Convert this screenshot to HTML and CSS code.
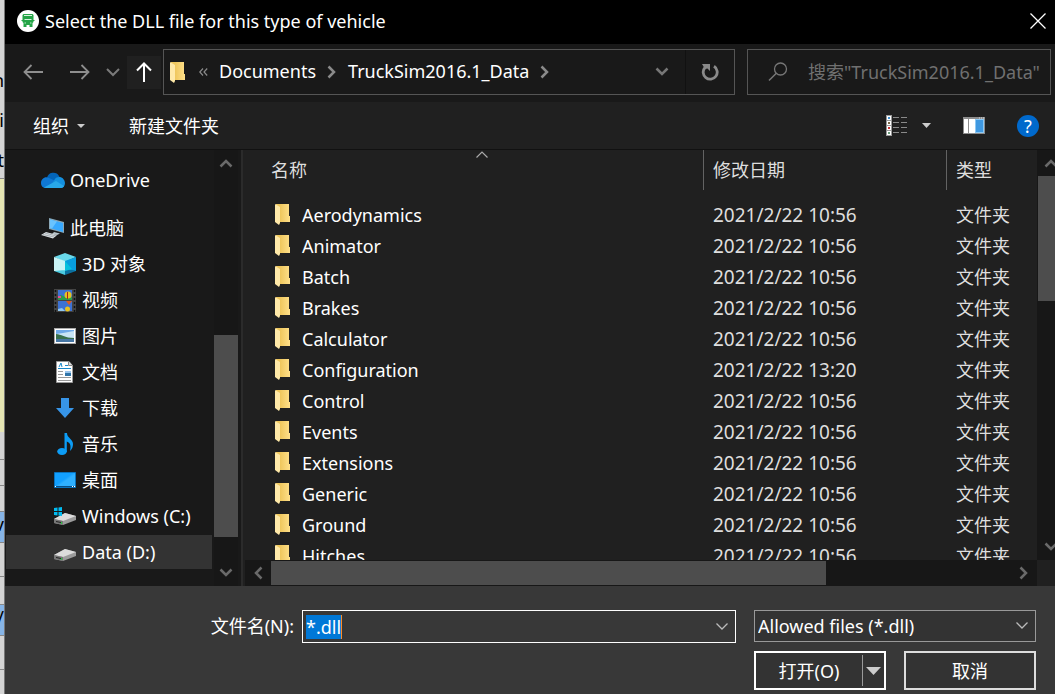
FILE: index.html
```html
<!DOCTYPE html>
<html lang="zh-CN">
<head>
<meta charset="utf-8">
<title>Select the DLL file for this type of vehicle</title>
<link rel="stylesheet" href="styles.css">
</head>
<body>
<svg class="defs" aria-hidden="true">
  <defs>
    <linearGradient id="fold" x1="0" x2="1"><stop offset="0.3" stop-color="#efc75d"/><stop offset="1" stop-color="#ffe08a"/></linearGradient>
    <linearGradient id="screen" x1="0" y1="0" x2="1" y2="1"><stop offset="0.45" stop-color="#12a0ff"/><stop offset="0.55" stop-color="#2fb0ff"/></linearGradient>
    <symbol id="folder" viewBox="0 0 15 21"><path d="M1 0h13v12h1v6H1z" fill="url(#fold)"/><path d="M0 0l5 3v16l-1 2-4-3z" fill="#ffe9a8"/></symbol>
    <symbol id="up" viewBox="0 0 14 10"><path d="M1.500 8.500L7 3l5.500 5.500" fill="none" stroke="currentColor" stroke-width="2.500"/></symbol>
    <symbol id="down" viewBox="0 0 14 10"><path d="M1.500 1.500L7 7l5.500-5.500" fill="none" stroke="currentColor" stroke-width="2.500"/></symbol>
    <symbol id="left" viewBox="0 0 10 14"><path d="M8.500 1.500L3 7l5.500 5.500" fill="none" stroke="currentColor" stroke-width="2.500"/></symbol>
    <symbol id="right" viewBox="0 0 10 14"><path d="M1.500 1.500L7 7l-5.500 5.500" fill="none" stroke="currentColor" stroke-width="2.500"/></symbol>
    <symbol id="drive" viewBox="0 0 22 12"><path d="M0 6L11 0l11 3v4L9 12 0 10z" fill="#9b9b9b"/><path d="M0 6L11 0l11 3-13 5z" fill="#dcdcdc"/><path d="M0 6l9 2v4l-9-2z" fill="#777"/><path d="M2 8l5 1v1L2 9z" fill="#222"/><path d="M7 9h1v2H7z" fill="#27c93f"/></symbol>
  </defs>
</svg>

<div class="behind" aria-hidden="true">
  <div class="seg s1"><span>h</span><span>i</span><span>t</span></div>
  <div class="seg s2"></div>
  <div class="seg s3"></div>
  <div class="seg s4"></div>
  <div class="seg s4"></div>
  <div class="seg s5"><span>v</span></div>
  <div class="seg s6"></div>
  <div class="seg s3"></div>
  <div class="seg s5"><span>/</span></div>
  <div class="seg s6"></div>
  <div class="seg s6"></div>
</div>

<main class="dialog">
  <header class="title">
    <svg width="22" height="22" viewBox="0 0 22 22"><circle cx="11" cy="11" r="11" fill="#fff"/><path d="M6.500 4h9l1 1v5h1v1h-1v1l-1 1v4h-3v-2h-3v2h-3v-4l-1-1v-1h-1v-1h1V5z" fill="#25a447"/><path d="M7 5.500h8M7.500 9.500h7" stroke="#d8f2de"/><path d="M7.500 13H9M13 13h1.500" stroke="#bfe8ca"/></svg>
    <h1>Select the DLL file for this type of vehicle</h1>
    <button class="close" aria-label="Close"><svg width="16" height="16" viewBox="0 0 16 16"><path d="M.5.5l15 15M15.500.5l-15 15" stroke="#fff" stroke-width="1.300"/></svg></button>
  </header>

  <nav class="nav">
    <div class="arrows">
      <button aria-label="Back"><svg width="20" height="16" viewBox="0 0 20 16"><path d="M20 8H1.500M8.500 1l-7 7 7 7" fill="none" stroke="#8e8e8e" stroke-width="1.800"/></svg></button>
      <button aria-label="Forward"><svg width="20" height="16" viewBox="0 0 20 16"><path d="M0 8h18.500M11.500 1l7 7-7 7" fill="none" stroke="#8e8e8e" stroke-width="1.800"/></svg></button>
      <button class="recent" aria-label="Recent"><svg width="14" height="10" viewBox="0 0 14 10"><path d="M1 2l6 6 6-6" fill="none" stroke="#7a7a7a" stroke-width="2"/></svg></button>
      <button class="upbtn" aria-label="Up"><svg width="16" height="20" viewBox="0 0 16 20"><path d="M8 20V1.500M1 8.500l7-7 7 7" fill="none" stroke="#fff" stroke-width="2"/></svg></button>
    </div>
    <div class="address">
      <svg width="15" height="21"><use href="#folder"/></svg>
      <svg class="more" width="9" height="8" viewBox="0 0 9 8"><path d="M4 .5L.8 4 4 7.500M8.200.5L5 4l3.200 3.500" fill="none" stroke="#8a8a8a" stroke-width="1.200"/></svg>
      <a href="#">Documents</a>
      <svg class="sep" width="10" height="14"><use href="#right"/></svg>
      <a href="#">TruckSim2016.1_Data</a>
      <svg class="sep" width="10" height="14"><use href="#right"/></svg>
      <button class="history" aria-label="History"><svg width="14" height="10"><use href="#down"/></svg></button>
      <button class="refresh" aria-label="Refresh"><svg width="18" height="18" viewBox="0 0 18 18"><path d="M4 4.500A7 7 0 1 0 13 3.300" fill="none" stroke="#8a8a8a" stroke-width="2.800"/><path d="M1 1h8v7L6.500 5.500 4 6z" fill="#8a8a8a"/></svg></button>
    </div>
    <label class="search">
      <svg width="20" height="20" viewBox="0 0 20 20"><circle cx="12.500" cy="7" r="6" fill="none" stroke="#777" stroke-width="1.300"/><path d="M8.300 11.200L1 18.500" stroke="#777" stroke-width="1.500"/></svg>
      <input type="text" aria-label="Search" placeholder='搜索"TruckSim2016.1_Data"'>
    </label>
  </nav>

  <div class="tools">
    <button class="organize">组织<svg width="8" height="4" viewBox="0 0 8 4"><path d="M0 0h8L4 4z" fill="#ccc"/></svg></button>
    <button>新建文件夹</button>
    <div class="right">
      <button aria-label="View"><svg width="22" height="22" viewBox="0 0 22 22"><path d="M0 0h6v21H0z" fill="#999"/><path d="M1 1h4v4H1zM1 6h4v4H1zM1 11h4v4H1zM1 16h4v4H1z" fill="#fff"/><path d="M2 2h2v2H2z" fill="#3d8fd0"/><path d="M2 7h2v2H2z" fill="#7a6a4a"/><path d="M2 12h2v2H2z" fill="#c33"/><path d="M2 17h2v2H2z" fill="#6a9a7a"/><path d="M7 2.500h6m2 0h6M7 7.500h6m2 0h6M7 12.500h6m2 0h6M7 17.500h6m2 0h6" stroke="#8a8a8a"/></svg></button>
      <button class="viewmenu" aria-label="View menu"><svg width="9" height="5" viewBox="0 0 9 5"><path d="M0 0h9L4.500 5z" fill="#ccc"/></svg></button>
      <button class="pane" aria-label="Preview pane"><svg width="22" height="17" viewBox="0 0 22 17"><path d="M0 0h22v17H0z" fill="#8d8d8d"/><path d="M1 2h4v14H1zM6 2h6v14H6z" fill="#fff"/><path d="M12 2h9v14h-9z" fill="#8cc8f4"/><path d="M13 3h7v12h-7z" fill="#3f98e0"/><path d="M16 1h1m1 0h1m1 0h1" stroke="#ddd"/></svg></button>
      <button class="help" aria-label="Help">?</button>
    </div>
  </div>

  <section class="content">
    <aside class="side">
      <ul class="tree">
        <li class="root"><svg width="24" height="16" viewBox="0 0 24 16"><path d="M6 6A6.500 6.500 0 0 1 18 4l3 6H4z" fill="#0364b8"/><path d="M0 11c0-4 4-7 8-5l9 4-8 6H5c-3 0-5-2-5-5z" fill="#0f78d4"/><path d="M14 7c2-3 9-3 10 4 0 3-2 5-4 5H8z" fill="#1490df"/><path d="M3 15.500L15 9l8 5c-1 1.500-2 2-4 2H5z" fill="#28a8ea"/></svg><span>OneDrive</span></li>
        <li class="root gap"><svg width="24" height="21" viewBox="0 0 24 21"><path d="M8 0l15 4v11L8 11z" fill="#8aa8b8"/><path d="M9 1.500l13 3.500v9L9 10z" fill="#38a9ff"/><path d="M9 1.500l7 2-5 7-2-.6z" fill="#69c3ff"/><path d="M13 14l6 1.500-3 1.500-5-1z" fill="#b8c4ca"/><path d="M5 14l11 3-4 3.500L0 17z" fill="#dfe3e6"/><path d="M2 16.500l11 2.500M4 15l11 3" stroke="#8f999f" stroke-width=".7"/></svg><span>此电脑</span></li>
        <li><svg width="22" height="22" viewBox="0 0 22 22"><path d="M0 4L11 0l11 4-11 5z" fill="#69d8ea"/><path d="M0 4l11 4v10L0 18z" fill="#c9f3f5"/><path d="M22 4L11 8v9l11 1z" fill="#079ddd"/><path d="M11 8v9l-11 1 11 4z" fill="#4bcbe0"/><path d="M11 16l11 2-11 4z" fill="#0b6f9e"/><path d="M11 8l7 8-7 2z" fill="#06c0dd"/></svg><span>3D 对象</span></li>
        <li><svg width="22" height="23" viewBox="0 0 22 23"><path d="M0 0h22v23H0z" fill="#444"/><path d="M4 1h14v10H4zM4 12h14v10H4z" fill="#3d72d4"/><path d="M1.500 1v22M20.500 1v22" stroke="#111" stroke-width="1.500" stroke-dasharray="2 2"/><path d="M4 8l3-2 4 2 3-1 4 1v3H4z" fill="#2d9a4e"/><path d="M4 7h3v2H4z" fill="#e94d92"/><circle cx="14" cy="6" r="3.500" fill="#e9c21f"/><path d="M13 3h1v7h-1z" fill="#a22"/><path d="M12 12h6l-3 4z" fill="#e05a1c"/><circle cx="13.500" cy="20" r="2.500" fill="#e9c21f"/><path d="M4 20l4-1 3 3H4z" fill="#8fc8ef"/></svg><span>视频</span></li>
        <li><svg width="22" height="16" viewBox="0 0 22 16"><path d="M0 0h22v16H0z" fill="#aaa"/><path d="M1 1h20v14H1z" fill="#fff"/><path d="M2 2h18v12H2z" fill="#6ea9e8"/><path d="M2 6l7-1 11-2v7H2z" fill="#c7e4f6"/><path d="M2 6c5 0 9 4 18 4v2H2z" fill="#38704d"/><path d="M2 11h18v3H2z" fill="#4777a5"/></svg><span>图片</span></li>
        <li><svg width="22" height="22" viewBox="0 0 22 22"><path d="M2.500.5H15l3.500 4v17h-16z" fill="#fff" stroke="#999"/><path d="M14.500.5v4h4" fill="#ddd" stroke="#888"/><path d="M4 7.500h13" stroke="#1888c9"/><path d="M5 6l2-4 1 4M11 4.500h3" fill="none" stroke="#1888c9"/><path d="M4 10.500h5m-5 3h5m-5 3h13m-13 3h13" stroke="#999"/><path d="M11 10h6v5h-6z" fill="#3175a8"/><path d="M11 10h6v2h-6z" fill="#9ac5ed"/></svg><span>文档</span></li>
        <li><svg width="22" height="20" viewBox="0 0 22 20"><path d="M7 0h8v10h5l-9 10-9-10h5z" fill="#3795e8"/></svg><span>下载</span></li>
        <li><svg width="22" height="22" viewBox="0 0 22 22"><ellipse cx="8" cy="18.500" rx="4.800" ry="3.500" fill="#0c9cf5"/><path d="M10.500 0H13c0 5 6 6 6 11 0 3-1 5-3 7 1-4 1-8-3.200-9.500V19h-2.300z" fill="#0c9cf5"/></svg><span>音乐</span></li>
        <li><svg width="22" height="16" viewBox="0 0 22 16"><path d="M.5.5h21v15H.5z" fill="url(#screen)" stroke="#0872bd"/><path d="M1 14.500h20" stroke="#064d85"/><path d="M1 14.500h1m16 0h1m1 0h1" stroke="#fff"/></svg><span>桌面</span></li>
        <li><svg width="22" height="20" viewBox="0 0 22 20"><use href="#drive" y="7" width="22" height="12"/><path d="M0 2l3.500-.5V5H0zM4.500 1.400L8 .9V5H4.500zM0 6h3.500v3.500L0 9zM4.500 6H8v4l-3.500-.4z" fill="#00bcf2"/></svg><span>Windows (C:)</span></li>
        <li class="selected"><svg width="22" height="20"><use href="#drive" y="7" width="22" height="12"/></svg><span>Data (D:)</span></li>
      </ul>
      <div class="vbar sidebar-scroll">
        <svg width="14" height="10"><use href="#up"/></svg>
        <div class="rail"><i class="thumb low-thumb"></i></div>
        <svg width="14" height="10"><use href="#down"/></svg>
      </div>
    </aside>

    <div class="files">
      <div class="list">
        <table>
          <colgroup><col><col class="c-date"><col class="c-type"></colgroup>
          <thead><tr><th>名称<svg class="sort" width="12" height="7" viewBox="0 0 12 7"><path d="M.5 6.500L6 1l5.500 5.500" fill="none" stroke="#aaa" stroke-width="1.200"/></svg></th><th>修改日期</th><th>类型</th></tr></thead>
          <tbody>
            <tr><td><svg width="15" height="21"><use href="#folder"/></svg>Aerodynamics</td><td>2021/2/22 10:56</td><td>文件夹</td></tr>
            <tr><td><svg width="15" height="21"><use href="#folder"/></svg>Animator</td><td>2021/2/22 10:56</td><td>文件夹</td></tr>
            <tr><td><svg width="15" height="21"><use href="#folder"/></svg>Batch</td><td>2021/2/22 10:56</td><td>文件夹</td></tr>
            <tr><td><svg width="15" height="21"><use href="#folder"/></svg>Brakes</td><td>2021/2/22 10:56</td><td>文件夹</td></tr>
            <tr><td><svg width="15" height="21"><use href="#folder"/></svg>Calculator</td><td>2021/2/22 10:56</td><td>文件夹</td></tr>
            <tr><td><svg width="15" height="21"><use href="#folder"/></svg>Configuration</td><td>2021/2/22 13:20</td><td>文件夹</td></tr>
            <tr><td><svg width="15" height="21"><use href="#folder"/></svg>Control</td><td>2021/2/22 10:56</td><td>文件夹</td></tr>
            <tr><td><svg width="15" height="21"><use href="#folder"/></svg>Events</td><td>2021/2/22 10:56</td><td>文件夹</td></tr>
            <tr><td><svg width="15" height="21"><use href="#folder"/></svg>Extensions</td><td>2021/2/22 10:56</td><td>文件夹</td></tr>
            <tr><td><svg width="15" height="21"><use href="#folder"/></svg>Generic</td><td>2021/2/22 10:56</td><td>文件夹</td></tr>
            <tr><td><svg width="15" height="21"><use href="#folder"/></svg>Ground</td><td>2021/2/22 10:56</td><td>文件夹</td></tr>
            <tr><td><svg width="15" height="21"><use href="#folder"/></svg>Hitches</td><td>2021/2/22 10:56</td><td>文件夹</td></tr>
          </tbody>
        </table>
      </div>
      <div class="vbar list-scroll">
        <svg width="14" height="10"><use href="#up"/></svg>
        <div class="rail"><i class="thumb top-thumb"></i></div>
        <svg width="14" height="10"><use href="#down"/></svg>
      </div>
      <div class="hbar">
        <svg width="10" height="14"><use href="#left"/></svg>
        <div class="rail"><i class="thumb"></i></div>
        <svg width="10" height="14"><use href="#right"/></svg>
      </div>
    </div>
  </section>

  <form class="foot">
    <label for="fname">文件名(N):</label>
    <div class="combo">
      <input id="fname" type="text" value="*.dll" autofocus>
      <button type="button" aria-label="Show names"><svg width="12" height="7" viewBox="0 0 12 7"><path d="M.5.5L6 6 11.500.5" fill="none" stroke="#bbb" stroke-width="1.300"/></svg></button>
    </div>
    <div class="filter">
      <select aria-label="File type"><option>Allowed files (*.dll)</option></select>
      <svg width="12" height="7" viewBox="0 0 12 7"><path d="M.5.5L6 6 11.500.5" fill="none" stroke="#bbb" stroke-width="1.300"/></svg>
    </div>
    <div class="actions">
      <div class="split">
        <button type="button">打开(O)</button>
        <button type="button" class="drop" aria-label="Open options"><svg width="15" height="8" viewBox="0 0 15 8"><path d="M0 0h15L7.500 8z" fill="#ccc"/></svg></button>
      </div>
      <button type="button" class="cancel">取消</button>
    </div>
  </form>
</main>
<script src="main.js"></script>
</body>
</html>
```
FILE: main.js
```js
const nameBox = document.getElementById("fname");
nameBox.focus();
nameBox.select();
```
FILE: styles.css
```css
* { box-sizing: border-box; }
body {
  margin: 0;
  height: 100vh;
  display: flex;
  overflow: hidden;
  background: #191919;
  color: #fff;
  font: 18px/24px "Noto Sans", "Noto Sans CJK SC", sans-serif;
}
button, input, select {
  margin: 0;
  padding: 0;
  border: 0;
  border-radius: 0;
  outline: 0;
  background: none;
  color: inherit;
  font: inherit;
}
button { display: flex; align-items: center; justify-content: center; }
a { color: inherit; text-decoration: none; }
svg { display: block; flex: none; }
.defs { position: absolute; width: 0; height: 0; }

/* sliver of the window underneath */
.behind { flex: none; width: 5px; overflow: hidden; border-right: 1px solid #777; background: #d4d4d4; color: #000; display: flex; flex-direction: column; }
.seg { flex: none; display: flex; flex-direction: column; align-items: flex-end; border-bottom: 1px solid #888; }
.s1 { height: 179px; padding-top: 68px; gap: 16px; }
.s2 { height: 253px; background: #e6e6b4; border: 0; }
.s3 { height: 28px; }
.s4 { height: 26px; }
.s5 { height: 31px; background: #86b4e6; }
.s6 { height: 34px; }

.dialog { flex: 1; min-width: 0; display: flex; flex-direction: column; }

.title { flex: none; height: 44px; padding: 0 9px 2px 12px; display: flex; align-items: center; gap: 6px; background: #000; }
.title h1 { flex: 1; margin: 0; font-size: 18px; font-weight: 400; }

.nav { flex: none; height: 58px; padding: 5px 4px 7px 18px; display: flex; gap: 2px; }
.arrows { display: flex; align-items: center; }
.arrows button { width: 34px; height: 33px; }
.arrows button:nth-child(1) { width: 20px; margin-right: 27px; }
.arrows button:nth-child(2) { width: 20px; }
.arrows .recent { width: 37px; padding-left: 8px; }
.arrows .upbtn { background: #202020; }
.address, .search { display: flex; align-items: center; border: 1px solid #555; }
.address { flex: 1; padding-left: 6px; }
.address a { padding-bottom: 2px; }
.more { margin: 0 11px 0 14px; }
.sep { margin: 0 11px; color: #8a8a8a; }
.history { width: 48px; height: 100%; margin-left: auto; color: #777; border-right: 1px solid #111; }
.refresh { width: 48px; height: 100%; }
.search { flex: none; width: 304px; margin-left: 10px; padding-left: 20px; gap: 20px; }
.search input { flex: 1; min-width: 0; }
.search input::placeholder { color: #707070; opacity: 1; }

.tools { flex: none; height: 48px; padding: 0 16px 0 28px; display: flex; align-items: center; background: #202020; border-bottom: 1px solid #111; }
.organize { gap: 8px; margin-right: 44px; }
.right { display: flex; align-items: center; margin-left: auto; }
.viewmenu { margin-left: 14px; }
.pane { margin: 0 32px; }
.help { width: 22px; height: 22px; border-radius: 50%; background: #0069cc; }

.content { flex: 1; min-height: 0; display: flex; }
.side { flex: none; width: 238px; display: flex; border-right: 2px solid #2b2b2b; }
.tree { flex: 1; min-width: 0; margin: 0; padding: 13px 2px 0 1px; list-style: none; overflow: hidden; }
.tree li { height: 34px; margin-bottom: 2px; padding-left: 48px; display: flex; align-items: center; gap: 6px; }
.tree .root { padding-left: 35px; gap: 5px; }
.tree .gap { margin-top: 14px; }
.tree .selected { background: #333; }

.vbar { display: flex; flex-direction: column; align-items: center; background: #171717; color: #6a6a6a; overflow: hidden; }
.vbar > svg { margin: 8px 0; }
.rail { flex: 1; align-self: stretch; display: flex; }
.thumb { display: block; background: #4d4d4d; }
.vbar .thumb { width: 100%; }
.sidebar-scroll { flex: none; width: 24px; margin-right: 3px; }
.sidebar-scroll .rail { padding-bottom: 23px; }
.low-thumb { height: 56%; align-self: flex-end; }
.top-thumb { height: 35%; }

.files { flex: 1; min-width: 0; display: grid; grid-template: minmax(0, 1fr) 26px / minmax(0, 1fr) 18px; background: #202020; }
.list { overflow: hidden; }
table { width: 100%; border-collapse: separate; border-spacing: 0; table-layout: fixed; }
.c-date { width: 243px; }
.c-type { width: 90px; }
th, td { padding: 0 0 0 9px; text-align: left; font-weight: 400; color: #dedede; white-space: nowrap; }
th { position: relative; height: 40px; border-right: 1px solid #636363; }
th:first-child { padding-left: 28px; }
th:last-child { border: 0; }
.sort { position: absolute; top: 1px; left: 52%; transform: translateX(-50%); }
tbody::before { content: ""; display: block; height: 10px; }
td { height: 31px; padding-bottom: 2px; }
td:nth-child(2) { font-size: 19px; }
td:first-child { display: flex; align-items: center; gap: 12px; padding-left: 32px; color: #fff; }
.list-scroll { border-left: 1px solid #171717; }
.list-scroll > svg { align-self: flex-start; margin-left: 6px; }
.hbar { display: flex; align-items: center; margin-left: 2px; background: #171717; color: #6a6a6a; }
.hbar > svg { margin: 0 8px; }
.hbar .rail { align-self: stretch; padding: 1px 0; }
.hbar .thumb { width: 75%; }

.foot { flex: none; padding: 24px 19px 4px 0; display: grid; grid-template-columns: 289px minmax(0, 1fr) 282px; column-gap: 18px; row-gap: 8px; background: #383838; }
.foot > label { text-align: right; align-self: center; padding-bottom: 2px; }
.combo { display: flex; align-items: center; justify-content: space-between; height: 33px; margin-left: -10px; padding: 0 7px 0 3px; border: 1px solid #fff; }
.combo input { field-sizing: content; height: 24px; border-right: 1px solid #ff8c28; }
.combo input::selection { background: #0078d7; color: #fff; }
.filter { position: relative; display: flex; height: 32px; }
.filter select { flex: 1; appearance: none; padding: 0 0 1px 3px; border: 1px solid #999; background: #333; }
.filter svg { position: absolute; right: 8px; top: 12px; pointer-events: none; }
.actions { grid-column: 3; display: grid; grid-template-columns: 1fr 1fr; gap: 18px; height: 39px; }
.split, .cancel { border: 2px solid #fff; background: #333; }
.split { display: flex; padding: 2px 0; }
.split button { flex: 1; }
.split .drop { flex: none; width: 22px; border-left: 1px solid #999; }
.cancel { border-color: #ddd; }
```
